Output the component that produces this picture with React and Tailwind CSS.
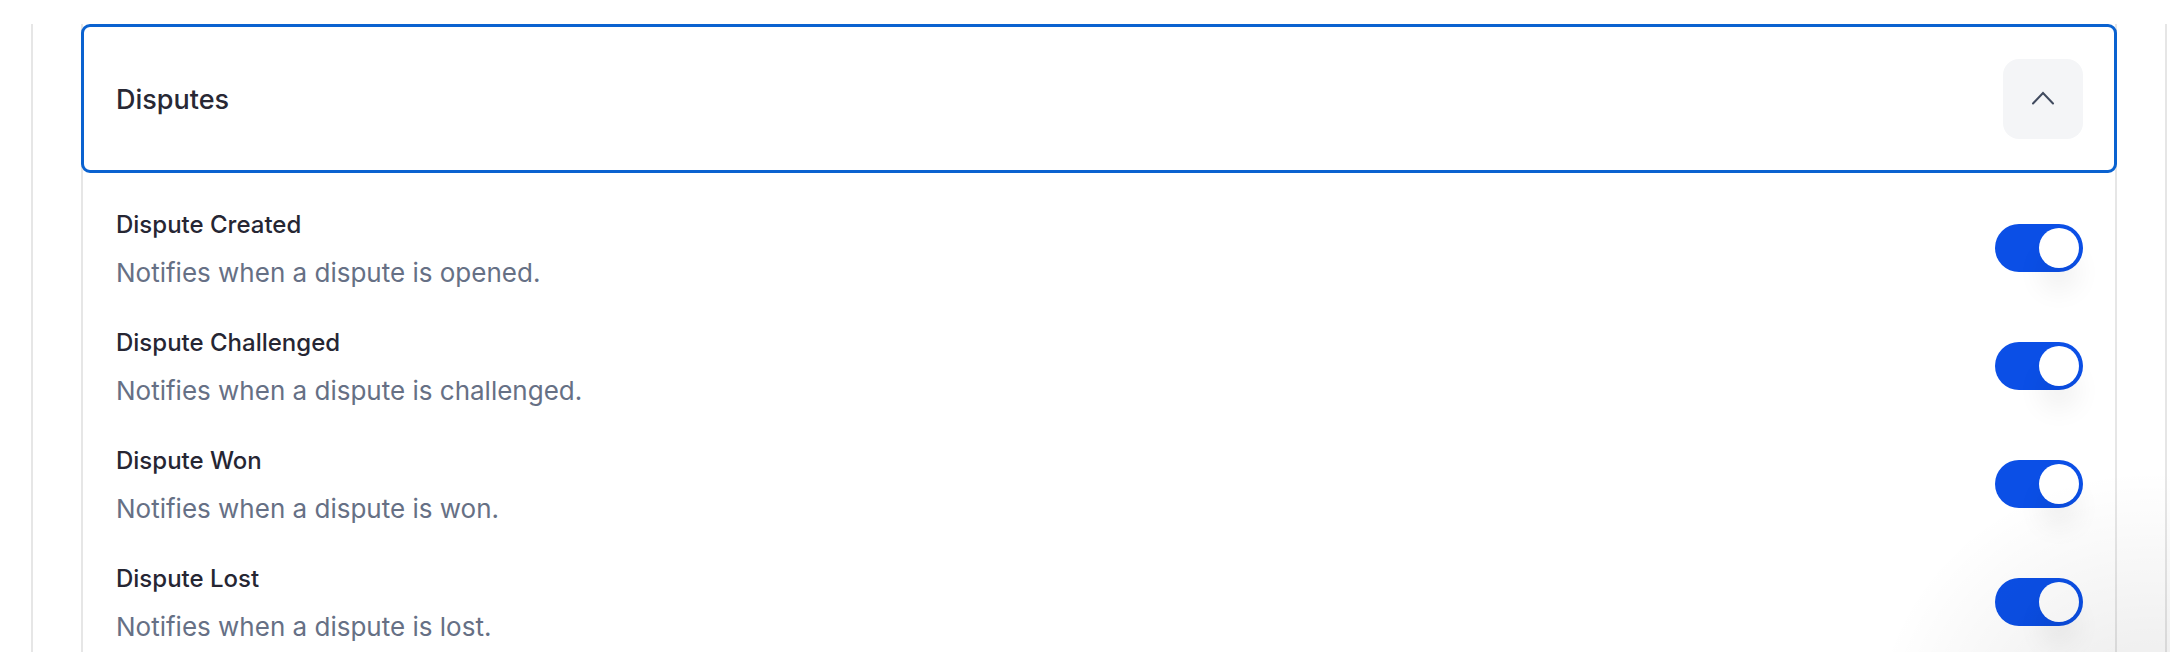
const rows = [
  ["Dispute Created", "Notifies when a dispute is opened."],
  ["Dispute Challenged", "Notifies when a dispute is challenged."],
  ["Dispute Won", "Notifies when a dispute is won."],
  ["Dispute Lost", "Notifies when a dispute is lost."],
];

function Toggle() {
  return (
    <div className="mt-[15px] flex h-[48px] w-[88px] shrink-0 items-center justify-end rounded-full bg-[#0b4fe6] p-[4px]">
      <div className="h-[40px] w-[40px] rounded-full bg-white shadow-[0_24px_28px_-2px_rgba(0,0,0,0.07)]" />
    </div>
  );
}

export default function App() {
  return (
    <div className="relative h-[652px] w-[2170px] overflow-hidden bg-white font-['Inter',sans-serif]">
      <div className="ml-[31px] h-full w-[2136px] border-x-2 border-[#e6e6e6] px-[48px]">
        <div className="h-full border-x-2 border-[#e6e6e6]">
          <div className="relative z-10 -mx-[2px] mt-[24px] flex h-[149px] items-center justify-between rounded-[9px] border-[3px] border-[#0a62d0] bg-white pl-[32px] pr-[31px]">
            <span className="mt-[2px] text-[27px] font-medium leading-none text-[#282834]">Disputes</span>
            <button className="flex h-[80px] w-[80px] items-center justify-center rounded-[16px] bg-[#f4f5f7]">
              <svg width="24" height="14" viewBox="0 0 24 14" fill="none" className="-mt-[2px]">
                <polyline points="2,12.5 12,2 22,12.5" stroke="#414b5f" strokeWidth="2" strokeLinecap="round" strokeLinejoin="miter" />
              </svg>
            </button>
          </div>
          <div className="flex flex-col gap-[34px] pl-[33px] pr-[32px] pt-[36px]">
            {rows.map(([t, d]) => (
              <div key={t} className="flex items-start justify-between">
                <div className="flex flex-col">
                  <div className="h-[32px] text-[24px] font-medium leading-[32px] text-[#262633]">{t}</div>
                  <div className="mt-[12px] h-[40px] text-[26px] leading-[40px] text-[#667085]">{d}</div>
                </div>
                <Toggle />
              </div>
            ))}
          </div>
        </div>
      </div>
      <div className="pointer-events-none absolute left-[1870px] top-[470px] h-[540px] w-[560px] bg-[radial-gradient(closest-side,rgba(0,0,0,0.09),rgba(0,0,0,0))]" />
    </div>
  );
}
